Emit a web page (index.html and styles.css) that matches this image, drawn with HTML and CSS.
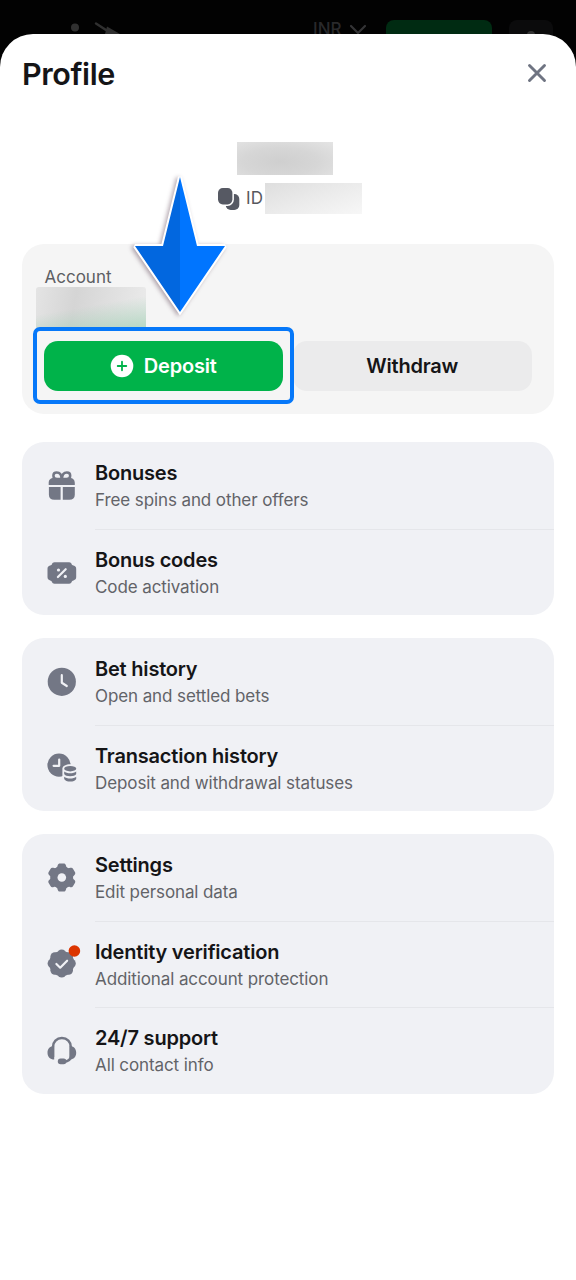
FILE: index.html
```html
<!DOCTYPE html>
<html lang="en">
<head>
<meta charset="utf-8">
<title>Profile</title>
<link rel="stylesheet" href="styles.css">
</head>
<body>
<div class="screen">
  <header class="topbar">
    <svg class="logo" viewBox="0 0 60 14" width="60" height="14"><circle cx="10" cy="7.5" r="4"/><path d="M31 3.5 L41 10" class="logo-line"/><path d="M42 6.5 L55 14 H40z"/></svg>
    <span class="currency">INR</span>
    <svg class="chevron" viewBox="0 0 18 12" width="18" height="12"><path d="M2 2l7 7 7-7"/></svg>
    <span class="top-deposit"></span>
    <span class="top-user"><svg viewBox="0 0 10 10" width="10" height="10"><circle cx="5" cy="5" r="4"/></svg></span>
  </header>

  <main class="sheet">
    <div class="sheet-head">
      <h1>Profile</h1>
      <svg class="close" viewBox="0 0 20 20" width="20" height="20"><path d="M2.5 2.5l15 15M17.5 2.5l-15 15"/></svg>
    </div>

    <section class="user">
      <div class="mask mask-name"></div>
      <div class="user-id">
        <svg class="copy" viewBox="0 0 24 24" width="24" height="24"><rect x="8.7" y="7" width="13.6" height="16" rx="5"/><rect class="copy-front" x="1" y="1" width="14.4" height="16.4" rx="4.8"/></svg>
        <span>ID</span>
        <div class="mask mask-id"></div>
      </div>
    </section>

    <section class="account">
      <div class="account-label">Account</div>
      <div class="mask mask-balance"></div>
      <div class="actions">
        <div class="btn deposit">
          <svg viewBox="0 0 24 24" width="24" height="24"><circle cx="12" cy="12" r="11.3" fill="#fff"/><path d="M12 7.7v8.6M7.7 12h8.6" stroke="#00b34a" stroke-width="1.8" stroke-linecap="round"/></svg>
          <span>Deposit</span>
        </div>
        <div class="btn withdraw">Withdraw</div>
      </div>
      <div class="highlight"></div>
      <svg class="arrow" viewBox="0 0 110 155" width="110" height="155">
        <path class="arrow-edge" d="M55 7L72 76H100L55 142L10 76H38z"/>
        <path fill="#0075ff" d="M55 7L72 76H100L55 142z"/>
        <path fill="#0267df" d="M55 7V142L10 76H38z"/>
      </svg>
    </section>

    <section class="card">
      <div class="row">
        <svg class="icon" viewBox="0 0 36 36"><g class="bow"><path d="M17.6 11H13C10.6 11 9.4 9.5 9.4 7.8C9.4 5.9 10.8 4.6 12.7 4.6C15.6 4.6 17.6 7 17.6 11z"/><path d="M18 11H22.6C25 11 26.2 9.5 26.2 7.8C26.2 5.9 24.8 4.6 22.9 4.6C20 4.6 18 7 18 11z"/></g><path d="M10 9.9h15.5c3.7 0 5.3 2 5.3 5V17H4.7v-2.1c0-3 1.6-5 5.3-5zM4.9 19h11.7v12.7H10.3c-3.4 0-5.4-1.7-5.4-5zM18.8 19h12v7.7c0 3.3-2 5-5.4 5h-6.6z"/></svg>
        <div class="copyblock"><h2>Bonuses</h2><p>Free spins and other offers</p></div>
      </div>
      <div class="row">
        <svg class="icon" viewBox="0 0 36 36"><path d="M10.5 7.2h14.6c1.4 0 2.1.7 2.5 1.8.4 1 .8 1.3 1.9 1.6 1.9.5 2.7 1.4 2.7 3.3v8.2c0 1.9-.8 2.8-2.7 3.3-1.1.3-1.5.7-1.9 1.7-.4 1-1.1 1.7-2.5 1.7H10.5c-1.4 0-2.1-.7-2.5-1.7-.4-1-.8-1.4-1.9-1.7-1.8-.5-2.6-1.4-2.6-3.3v-8.2c0-1.9.8-2.8 2.6-3.3 1.1-.3 1.5-.6 1.9-1.6.4-1.1 1.1-1.8 2.5-1.8z"/><path class="cut" d="M21.7 14.2l-7.8 7.8"/><circle class="hole" cx="14.5" cy="15" r="1.6"/><circle class="hole" cx="21.3" cy="21.4" r="1.6"/></svg>
        <div class="copyblock"><h2>Bonus codes</h2><p>Code activation</p></div>
      </div>
    </section>

    <section class="card">
      <div class="row">
        <svg class="icon" viewBox="0 0 36 36"><circle cx="17.8" cy="17.8" r="14.1"/><path class="cut" d="M17.8 11.2v7.6l5 3.2"/></svg>
        <div class="copyblock"><h2>Bet history</h2><p>Open and settled bets</p></div>
      </div>
      <div class="row">
        <svg class="icon" viewBox="0 0 36 36"><circle cx="15" cy="15.1" r="11.6"/><path class="cut" d="M15.2 9.5v6.3H9.6"/><path class="hole" d="M18.4 18.8c0-6 15.6-6 15.6 0V34H20.2l-1.8-3.8z"/><ellipse cx="26.2" cy="18.7" rx="6" ry="2.7"/><path d="M20.2 21.4c2.4 2.4 9.6 2.4 12 0v2.5c-1.2 3-10.8 3-12 0zM20.2 26.7c2.4 2.4 9.6 2.4 12 0v2.3c-1.2 3.4-10.8 3.4-12 0z"/></svg>
        <div class="copyblock"><h2>Transaction history</h2><p>Deposit and withdrawal statuses</p></div>
      </div>
    </section>

    <section class="card">
      <div class="row">
        <svg class="icon" viewBox="0 0 36 36"><g transform="translate(17.8 17.5)"><circle r="11.3"/><g id="tooth-pair"><path d="M-6 -9.3C-4.6 -10 -4.5 -11 -4.1 -12.3C-3.7 -13.6 -3 -14.1 -1.8 -14.1H1.8C3 -14.1 3.7 -13.6 4.1 -12.3C4.5 -11 4.6 -10 6 -9.3V9.3C4.6 10 4.5 11 4.1 12.3C3.7 13.6 3 14.1 1.8 14.1H-1.8C-3 14.1 -3.7 13.6 -4.1 12.3C-4.5 11 -4.6 10 -6 9.3z"/></g><use href="#tooth-pair" transform="rotate(60)"/><use href="#tooth-pair" transform="rotate(120)"/><circle class="hole" r="4.3"/></g></svg>
        <div class="copyblock"><h2>Settings</h2><p>Edit personal data</p></div>
      </div>
      <div class="row">
        <svg class="icon" viewBox="0 0 36 36"><g transform="translate(17.7 17.5)"><circle r="12.6"/><circle cy="-9.6" r="4.5"/><circle cy="9.6" r="4.5"/><circle cx="-9.6" r="4.5"/><circle cx="9.6" r="4.5"/><circle cx="6.8" cy="-6.8" r="4.5"/><circle cx="-6.8" cy="-6.8" r="4.5"/><circle cx="6.8" cy="6.8" r="4.5"/><circle cx="-6.8" cy="6.8" r="4.5"/></g><path class="cut" d="M12.4 18l3.8 3.7 6.9-7"/><circle cx="30.4" cy="5" r="5.8" fill="#dc3500"/></svg>
        <div class="copyblock"><h2>Identity verification</h2><p>Additional account protection</p></div>
      </div>
      <div class="row">
        <svg class="icon" viewBox="0 0 36 36"><path class="band" d="M9 24V13.9C9 8.9 12.6 5 17.9 5S26.8 8.9 26.8 13.9V23C26.8 27.5 24 28.7 19 28.7"/><path d="M10.2 13v13.5c-4 0-6.7-2.7-6.7-6.8S6.2 13 10.2 13zM25.6 13v13.5c3.9 0 6.6-2.7 6.6-6.8S29.5 13 25.6 13z"/><rect x="13.8" y="25.6" width="8.6" height="5.7" rx="2.8"/></svg>
        <div class="copyblock"><h2>24/7 support</h2><p>All contact info</p></div>
      </div>
    </section>
  </main>
</div>
</body>
</html>
```
FILE: styles.css
```css
* { box-sizing: border-box; }
body { margin: 0; background: #000; font-family: Inter, "Liberation Sans", sans-serif; color: #151517; }
h1, h2, p { margin: 0; }
.screen { height: 1280px; overflow: hidden; background: #020202; }

.topbar { height: 53.5px; margin-bottom: -20px; padding: 20px 22px 0 65px; display: flex; align-items: flex-start; }
.logo { fill: #303030; flex: none; }
.logo-line { stroke: #303030; stroke-width: 2.5; stroke-linecap: round; }
.currency { margin-left: 188px; font-size: 17px; line-height: 18px; font-weight: 500; color: #29292b; width: 30px; }
.chevron { margin: 4px 0 0 6px; fill: none; stroke: #343436; stroke-width: 2.2; stroke-linecap: round; stroke-linejoin: round; }
.top-deposit { width: 106px; height: 33px; margin-left: 19px; border-radius: 8px; background: #002b12; flex: none; }
.top-user { width: 44px; height: 33px; margin-left: 17px; border-radius: 8px; background: #0b0b0c; display: flex; justify-content: center; padding-top: 10px; flex: none; }
.top-user svg { fill: #333; }

.sheet { position: relative; height: 1246.5px; background: #fff; border-radius: 33px 33px 0 0; padding: 0 22px; }
.sheet-head { height: 108px; padding: 20px 7px 0 0; display: flex; justify-content: space-between; }
h1 { font-size: 30.5px; line-height: 40px; font-weight: 600; letter-spacing: -0.4px; }
.close { margin-top: 9px; fill: none; stroke: #6f7482; stroke-width: 2.9; stroke-linecap: round; }

.user { height: 102px; display: flex; flex-direction: column; align-items: center; }
.mask-name { width: 96px; height: 33px; margin-right: 6px; background: radial-gradient(ellipse at 45% 60%, #cfcfcf, #d6d6d6 50%, #e4e4e4 100%); }
.user-id { display: flex; align-items: center; height: 31px; margin: 8px 0 0 3px; font-size: 17px; color: #57595e; }
.copy { fill: #565963; margin: 1px 5px 0 0; }
.copy-front { stroke: #fff; stroke-width: 3; paint-order: stroke; }
.mask-id { width: 97px; height: 31px; margin-left: 2px; background: linear-gradient(160deg, #dedede, #ebebeb 50%, #f7f7f7); }

.account { position: relative; height: 170px; background: #f5f5f5; border-radius: 22px; padding: 23px 22px 0; }
.account-label { font-size: 17px; line-height: 21px; color: #5d5e63; padding-left: 0.5px; }
.mask-balance { width: 110px; height: 43px; margin: -1px 0 0 -8px; border-radius: 3px; background: linear-gradient(170deg, transparent 45%, rgba(160,208,180,.75) 100%), linear-gradient(100deg, #e4e4e4, #d5d5d5 35%, #ebebeb); }
.actions { display: flex; gap: 10.5px; margin-top: 11.6px; }
.btn { width: 238.5px; height: 50px; border-radius: 14px; display: flex; align-items: center; justify-content: center; font-size: 20px; font-weight: 600; letter-spacing: -0.2px; }
.deposit { background: #00b34a; color: #fff; gap: 10px; }
.withdraw { background: #ebebec; }
.highlight { position: absolute; left: 11px; top: 83.3px; width: 261px; height: 77px; border: 4px solid #0678f9; border-radius: 7px; }
.arrow { position: absolute; left: 103px; top: -74px; filter: drop-shadow(-2px 1px 2px rgba(60,30,50,.38)); }
.arrow-edge { fill: #fff; stroke: #fff; stroke-width: 4; stroke-linejoin: miter; stroke-miterlimit: 2; }

.card { background: #f0f1f5; border-radius: 22px; margin-top: 22.7px; }
.account + .card { margin-top: 28.7px; }
.row { height: 86.6px; padding-left: 21.5px; display: flex; align-items: center; gap: 15.5px; }
.icon { width: 36px; height: 36px; margin-top: 1px; flex: none; fill: #737785; overflow: visible; }
.copyblock { flex: 1; align-self: stretch; padding-top: 18px; }
.row + .row .copyblock { border-top: 1.5px solid #e5e6ea; padding-top: 17px; }
h2 { font-size: 20px; line-height: 27px; font-weight: 600; letter-spacing: -0.2px; }
p { font-size: 17px; line-height: 27px; color: #626368; letter-spacing: -0.1px; }
.bow, .band { fill: none; stroke: #737785; stroke-width: 2.5; }
.cut { fill: none; stroke: #f0f1f5; stroke-width: 2.2; stroke-linecap: round; stroke-linejoin: round; }
.hole { fill: #f0f1f5; }
```
